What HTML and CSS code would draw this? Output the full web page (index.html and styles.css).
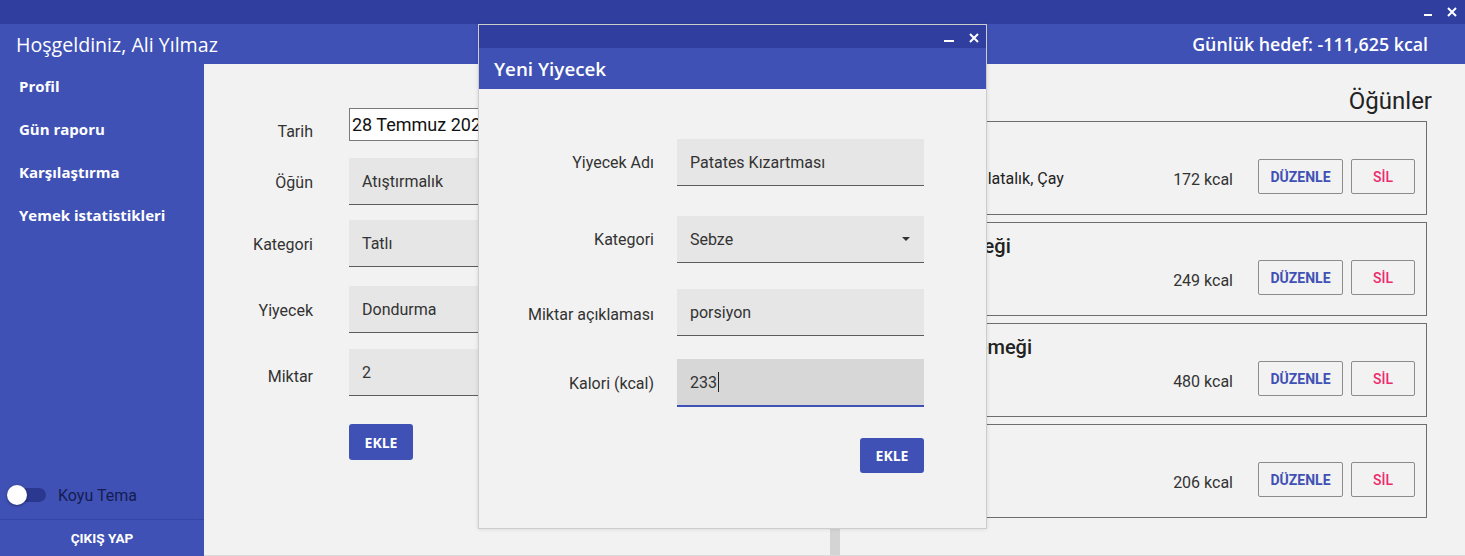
FILE: index.html
```html
<!DOCTYPE html>
<html lang="tr">
<head>
<meta charset="utf-8">
<title>Kalori Takip</title>
<link rel="stylesheet" href="styles.css">
</head>
<body>
<div class="app">
  <div class="titlebar">
    <svg class="ctl" viewBox="0 0 10 10"><rect x="1" y="7" width="8" height="2"/></svg>
    <svg class="ctl ctl-x" viewBox="0 0 10 10"><path d="M1 1L9 9M9 1L1 9"/></svg>
  </div>
  <header class="topbar">
    <div class="welcome">Hoşgeldiniz, Ali Yılmaz</div>
    <div class="goal">Günlük hedef: -111,625 kcal</div>
  </header>
  <div class="body">
    <aside class="sidebar">
      <nav class="nav">
        <a class="nav-item">Profil</a>
        <a class="nav-item">Gün raporu</a>
        <a class="nav-item">Karşılaştırma</a>
        <a class="nav-item">Yemek istatistikleri</a>
      </nav>
      <div class="theme">
        <span class="switch"><span class="track"></span><span class="thumb"></span></span>
        <span class="theme-label">Koyu Tema</span>
      </div>
      <button class="logout">ÇIKIŞ YAP</button>
    </aside>
    <main class="content">
      <section class="entry">
        <div class="frow r-date"><label class="flabel lb-low">Tarih</label><div class="date">28 Temmuz 2025</div></div>
        <div class="frow r-ogun"><label class="flabel">Öğün</label><div class="field">Atıştırmalık</div></div>
        <div class="frow r-kat"><label class="flabel">Kategori</label><div class="field">Tatlı</div></div>
        <div class="frow r-yiy"><label class="flabel">Yiyecek</label><div class="field">Dondurma</div></div>
        <div class="frow r-mik"><label class="flabel lb-mid">Miktar</label><div class="field">2</div></div>
        <button class="btn entry-btn">EKLE</button>
      </section>
      <div class="splitter"></div>
      <section class="meals">
        <h2 class="meals-title">Öğünler</h2>
        <div class="card">
          <div class="card-title">Kahvaltı</div>
          <div class="card-row">
            <span class="desc">Domates, Salatalık, Çay</span>
            <span class="kcal">172 kcal</span>
            <button class="obtn edit">DÜZENLE</button>
            <button class="obtn del">SİL</button>
          </div>
        </div>
        <div class="card">
          <div class="card-title">Öğle Yemeği</div>
          <div class="card-row">
            <span class="desc">Tavuk, Pilav</span>
            <span class="kcal">249 kcal</span>
            <button class="obtn edit">DÜZENLE</button>
            <button class="obtn del">SİL</button>
          </div>
        </div>
        <div class="card">
          <div class="card-title">Akşam Yemeği</div>
          <div class="card-row">
            <span class="desc">Köfte</span>
            <span class="kcal">480 kcal</span>
            <button class="obtn edit">DÜZENLE</button>
            <button class="obtn del">SİL</button>
          </div>
        </div>
        <div class="card">
          <div class="card-title"></div>
          <div class="card-row">
            <span class="desc">Dondurma</span>
            <span class="kcal">206 kcal</span>
            <button class="obtn edit">DÜZENLE</button>
            <button class="obtn del">SİL</button>
          </div>
        </div>
      </section>
    </main>
  </div>

  <div class="dialog">
    <div class="dlg-titlebar">
      <svg class="ctl" viewBox="0 0 10 10"><rect x="0" y="7" width="10" height="2"/></svg>
      <svg class="ctl ctl-x" viewBox="0 0 10 10"><path d="M1 1L9 9M9 1L1 9"/></svg>
    </div>
    <div class="dlg-header">Yeni Yiyecek</div>
    <div class="dlg-body">
      <div class="drow d1"><label class="dlabel">Yiyecek Adı</label><div class="field dfield">Patates Kızartması</div></div>
      <div class="drow d2"><label class="dlabel">Kategori</label><div class="field dfield select">Sebze<svg class="caret" viewBox="0 0 8 4"><path d="M0 0H8L4 4Z"/></svg></div></div>
      <div class="drow d3"><label class="dlabel lb-d3">Miktar açıklaması</label><div class="field dfield">porsiyon</div></div>
      <div class="drow d4"><label class="dlabel">Kalori (kcal)</label><div class="field dfield focused">233<span class="textcaret"></span></div></div>
      <button class="btn dlg-btn">EKLE</button>
    </div>
  </div>
</div>
</body>
</html>
```

FILE: styles.css
```css
* { box-sizing: border-box; }

html, body {
  margin: 0;
  padding: 0;
}

body {
  font-family: Roboto, "Open Sans", sans-serif;
  background: #f2f2f2;
  color: #333;
}

.app {
  position: relative;
  width: 1465px;
  height: 556px;
  display: flex;
  flex-direction: column;
  overflow: hidden;
}

/* window title bar */
.titlebar {
  height: 24px;
  background: #303f9f;
  display: flex;
  justify-content: flex-end;
  align-items: flex-start;
  gap: 14px;
  padding: 7px 8px 0 0;
}

.ctl {
  width: 10px;
  height: 10px;
  fill: #fff;
}

.ctl-x path {
  fill: none;
  stroke: #fff;
  stroke-width: 2;
}

/* header */
.topbar {
  height: 40px;
  background: #3f51b5;
  color: #fff;
  display: flex;
  align-items: center;
  justify-content: space-between;
  padding: 0 37px 0 16px;
}

.welcome {
  font-family: "Open Sans", sans-serif;
  font-weight: 500;
  font-size: 19.6px;
}

.goal {
  font-family: "Open Sans", sans-serif;
  font-weight: 600;
  font-size: 17.8px;
}

.body {
  flex: 1;
  display: flex;
  min-height: 0;
}

/* sidebar */
.sidebar {
  width: 204px;
  background: #3f51b5;
  display: flex;
  flex-direction: column;
}

.nav {
  flex: 1;
  display: flex;
  flex-direction: column;
  padding-top: 1px;
}

.nav-item {
  height: 43px;
  line-height: 43px;
  padding-left: 19px;
  color: #fff;
  font-family: "Open Sans", sans-serif;
  font-weight: 700;
  font-size: 15px;
}

.theme {
  height: 48px;
  display: flex;
  align-items: center;
  padding-left: 7px;
}

.switch {
  position: relative;
  width: 40px;
  height: 20px;
  margin-right: 11px;
}

.track {
  position: absolute;
  left: 3px;
  top: 3px;
  width: 36px;
  height: 14px;
  border-radius: 7px;
  background: #2b3890;
}

.thumb {
  position: absolute;
  left: 0;
  top: 0;
  width: 20px;
  height: 20px;
  border-radius: 50%;
  background: #fff;
  box-shadow: 0 1px 3px rgba(0, 0, 0, 0.4);
}

.theme-label {
  font-size: 16px;
  color: #161c52;
}

.logout {
  height: 37px;
  border: 0;
  border-top: 1px solid #3546a8;
  background: #3f51b5;
  color: #fff;
  font-family: Roboto, sans-serif;
  font-weight: 700;
  font-size: 13.6px;
  padding: 0;
}

/* main content */
.content {
  flex: 1;
  display: flex;
  background: #f2f2f2;
  border-bottom: 1px solid #dadada;
}

.entry {
  width: 626px;
  padding-top: 44px;
  display: flex;
  flex-direction: column;
  align-items: flex-start;
}

.frow {
  display: flex;
  align-items: center;
}

.flabel {
  width: 109px;
  margin-right: 36px;
  text-align: right;
  font-size: 16px;
  color: #333;
  padding-top: 2px;
}

.flabel.lb-low { padding-top: 14px; }
.flabel.lb-mid { padding-top: 8px; }

.r-date { height: 33px; margin-bottom: 17px; }
.r-ogun { height: 47px; margin-bottom: 15px; }
.r-kat { height: 47px; margin-bottom: 19px; }
.r-yiy { height: 47px; margin-bottom: 16px; }
.r-mik { height: 47px; margin-bottom: 28px; }

.date {
  width: 420px;
  height: 33px;
  background: #fff;
  border: 1px solid #7a7a7a;
  font-size: 18px;
  color: #111;
  padding-left: 2px;
  display: flex;
  align-items: center;
}

.field {
  width: 420px;
  height: 47px;
  background: #e6e6e6;
  border-bottom: 1px solid #5c5c5c;
  padding-left: 13px;
  display: flex;
  align-items: center;
  font-size: 16px;
  color: #333;
}

.btn {
  width: 64px;
  height: 36px;
  border: 0;
  border-radius: 3px;
  background: #3f51b5;
  color: #fff;
  font-family: "Open Sans", sans-serif;
  font-weight: 700;
  font-size: 14px;
  padding: 0;
}

.entry-btn { margin-left: 145px; }

.splitter {
  width: 10px;
  background: #d4d4d4;
}

/* meals */
.meals {
  flex: 1;
  padding: 22px 38px 0 45px;
}

.meals-title {
  margin: 0 -5px 5px 0;
  text-align: right;
  font-weight: 400;
  font-size: 24px;
  line-height: 30px;
  color: #222;
}

.card {
  border: 1px solid #6e6e6e;
  padding: 10px 11px 20px 12px;
  margin-bottom: 7px;
}

.card-title {
  height: 27px;
  line-height: 27px;
  font-size: 20px;
  font-weight: 500;
  color: #222;
}

.card-row {
  height: 35px;
  display: flex;
  align-items: center;
}

.desc {
  flex: 1;
  font-size: 16px;
  color: #222;
  padding-top: 3px;
}

.kcal {
  font-size: 16px;
  color: #333;
  margin-right: 25px;
  padding-top: 5px;
}

.obtn {
  height: 35px;
  border: 1px solid #8c8c8c;
  border-radius: 2px;
  background: transparent;
  font-family: Roboto, sans-serif;
  font-size: 14px;
  padding: 0;
}

.edit {
  width: 85px;
  color: #3f51b5;
  font-weight: 700;
}

.del {
  width: 64px;
  margin-left: 8px;
  color: #ec2a6c;
  font-weight: 500;
}

/* dialog */
.dialog {
  position: absolute;
  left: 478px;
  top: 24px;
  width: 509px;
  height: 505px;
  border: 1px solid #cdcdcd;
  background: #f2f2f2;
  display: flex;
  flex-direction: column;
  box-shadow: 0 0 4px rgba(0, 0, 0, 0.12);
}

.dlg-titlebar {
  height: 23px;
  background: #303f9f;
  display: flex;
  justify-content: flex-end;
  align-items: flex-start;
  gap: 15px;
  padding: 8px 7px 0 0;
}

.dlg-header {
  height: 41px;
  background: #3f51b5;
  color: #fff;
  display: flex;
  align-items: center;
  padding-left: 15px;
  font-family: "Open Sans", sans-serif;
  font-weight: 600;
  font-size: 18.8px;
}

.dlg-body {
  flex: 1;
  padding-top: 50px;
  display: flex;
  flex-direction: column;
  align-items: flex-start;
}

.drow {
  display: flex;
  align-items: center;
}

.dlabel {
  width: 175px;
  margin-right: 23px;
  text-align: right;
  font-size: 16px;
  color: #333;
}

.dlabel.lb-d3 { padding-top: 3px; }

.dfield { width: 247px; }

.d1 { margin-bottom: 30px; }
.d2 { margin-bottom: 26px; }
.d3 { margin-bottom: 23px; }
.d4 { margin-bottom: 31px; }

.select {
  justify-content: space-between;
  padding-right: 14px;
}

.caret {
  width: 8px;
  height: 4px;
  fill: #333;
}

.focused {
  height: 48px;
  background: #d7d7d7;
  border-bottom: 2px solid #3f51b5;
}

.textcaret {
  width: 1px;
  height: 20px;
  background: #222;
  margin-left: 1px;
}

.dlg-btn {
  height: 35px;
  margin-left: 381px;
}
```
